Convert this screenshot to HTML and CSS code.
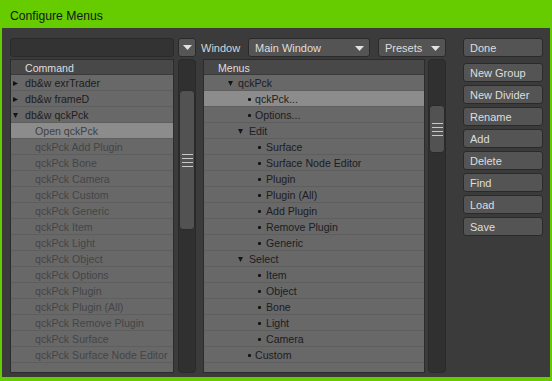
FILE: index.html
```html
<!DOCTYPE html>
<html>
<head>
<meta charset="utf-8">
<link rel="stylesheet" href="styles.css">
</head>
<body>
<div class="window">
  <div class="titlebar">Configure Menus</div>
  <div class="body">
    <div class="toolbar">
      <div class="search"></div>
      <div class="arrowbtn"><svg class="caret" width="9" height="5" viewBox="0 0 9 5"><polygon points="0,0 9,0 4.5,5"/></svg></div>
      <span class="label">Window</span>
      <div class="select wide"><span>Main Window</span><svg class="caret" width="9" height="5" viewBox="0 0 9 5"><polygon points="0,0 9,0 4.5,5"/></svg></div>
      <div class="select presets"><span>Presets</span><svg class="caret" width="9" height="5" viewBox="0 0 9 5"><polygon points="0,0 9,0 4.5,5"/></svg></div>
      <div class="btn done">Done</div>
    </div>
    <div class="main">
      <div class="list left">
        <div class="head">Command</div>
        <div class="row grp"><svg class="tri" width="5" height="5" viewBox="0 0 5 5"><polygon points="0,0 5,2.5 0,5"/></svg><span>db&amp;w exrTrader</span></div>
        <div class="row grp"><svg class="tri" width="5" height="5" viewBox="0 0 5 5"><polygon points="0,0 5,2.5 0,5"/></svg><span>db&amp;w frameD</span></div>
        <div class="row grp"><svg class="tri" width="5" height="5" viewBox="0 0 5 5"><polygon points="0,0 5,0 2.5,5"/></svg><span>db&amp;w qckPck</span></div>
        <div class="row child sel">Open qckPck</div>
        <div class="row child">qckPck Add Plugin</div>
        <div class="row child">qckPck Bone</div>
        <div class="row child">qckPck Camera</div>
        <div class="row child">qckPck Custom</div>
        <div class="row child">qckPck Generic</div>
        <div class="row child">qckPck Item</div>
        <div class="row child">qckPck Light</div>
        <div class="row child">qckPck Object</div>
        <div class="row child">qckPck Options</div>
        <div class="row child">qckPck Plugin</div>
        <div class="row child">qckPck Plugin (All)</div>
        <div class="row child">qckPck Remove Plugin</div>
        <div class="row child">qckPck Surface</div>
        <div class="row child">qckPck Surface Node Editor</div>
      </div>
      <div class="scroll s1"><div class="thumb t1"><i></i><i></i><i></i><i></i></div></div>
      <div class="list mid">
        <div class="head">Menus</div>
        <div class="row l1"><svg class="tri" width="5" height="5" viewBox="0 0 5 5"><polygon points="0,0 5,0 2.5,5"/></svg><span>qckPck</span></div>
        <div class="row l2 sel"><b class="dot"></b><span>qckPck...</span></div>
        <div class="row l2"><b class="dot"></b><span>Options...</span></div>
        <div class="row l2t"><svg class="tri" width="5" height="5" viewBox="0 0 5 5"><polygon points="0,0 5,0 2.5,5"/></svg><span>Edit</span></div>
        <div class="row l3"><b class="dot"></b><span>Surface</span></div>
        <div class="row l3"><b class="dot"></b><span>Surface Node Editor</span></div>
        <div class="row l3"><b class="dot"></b><span>Plugin</span></div>
        <div class="row l3"><b class="dot"></b><span>Plugin (All)</span></div>
        <div class="row l3"><b class="dot"></b><span>Add Plugin</span></div>
        <div class="row l3"><b class="dot"></b><span>Remove Plugin</span></div>
        <div class="row l3"><b class="dot"></b><span>Generic</span></div>
        <div class="row l2t"><svg class="tri" width="5" height="5" viewBox="0 0 5 5"><polygon points="0,0 5,0 2.5,5"/></svg><span>Select</span></div>
        <div class="row l3"><b class="dot"></b><span>Item</span></div>
        <div class="row l3"><b class="dot"></b><span>Object</span></div>
        <div class="row l3"><b class="dot"></b><span>Bone</span></div>
        <div class="row l3"><b class="dot"></b><span>Light</span></div>
        <div class="row l3"><b class="dot"></b><span>Camera</span></div>
        <div class="row l2"><b class="dot"></b><span>Custom</span></div>
      </div>
      <div class="scroll s2"><div class="thumb t2"><i></i><i></i><i></i><i></i></div></div>
      <div class="buttons">
        <div class="btn">New Group</div>
        <div class="btn">New Divider</div>
        <div class="btn">Rename</div>
        <div class="btn">Add</div>
        <div class="btn">Delete</div>
        <div class="btn">Find</div>
        <div class="btn">Load</div>
        <div class="btn">Save</div>
      </div>
    </div>
  </div>
</div>
</body>
</html>
```

FILE: styles.css
```css
* { box-sizing: border-box; }
html, body { margin: 0; padding: 0; }
body {
  background: #66cc00;
  font-family: "Liberation Sans", Arial, sans-serif;
  font-size: 10.6px;
  width: 552px;
  height: 381px;
  overflow: hidden;
}
.window { width: 552px; height: 381px; display: flex; flex-direction: column; }
.titlebar {
  height: 28px;
  padding: 4px 0 0 10px;
  line-height: 24px;
  font-size: 12.2px;
  color: #161616;
}
.body {
  margin: 0 2px 0 2px;
  height: 349px;
  background: #3b3b3b;
  padding: 10px 0 0 8px;
}
.toolbar { display: flex; align-items: center; height: 19px; }
.search {
  width: 164px; height: 19px;
  background: #333333;
  border: 1px solid #2a2a2a;
  border-radius: 3px;
}
.arrowbtn {
  width: 18px; height: 19px;
  margin-left: 4px;
  background: #565656;
  border: 1px solid #2a2a2a;
  border-radius: 3px;
  display: flex; align-items: center; justify-content: center;
}
.caret { fill: #e2e2e2; display: block; }
.label { width: 47px; margin-left: 5px; color: #d6d6d6; font-size: 11px; padding-top: 1px; }
.select {
  height: 19px;
  background: #545454;
  border: 1px solid #2a2a2a;
  border-radius: 3px;
  color: #dedede;
  display: flex; align-items: center; justify-content: space-between;
  padding: 1px 5px 0 6px;
  font-size: 11px;
}
.wide { width: 122px; }
.presets { width: 68px; margin-left: 8px; }
.btn {
  width: 80px; height: 19px;
  background: #545454;
  border: 1px solid #2a2a2a;
  border-radius: 3px;
  color: #dedede;
  padding: 1px 0 0 6px;
  line-height: 16px;
  font-size: 11px;
}
.done { margin-left: 17px; }
.main { display: flex; margin-top: 2px; height: 314px; }
.list {
  height: 314px;
  background: #686868;
  border: 1px solid #2c2c2c;
  overflow: hidden;
}
.left { width: 164px; }
.mid { width: 222px; margin-left: 7px; }
.head {
  height: 15px;
  background: #484848;
  color: #dedede;
  line-height: 14px;
  padding-top: 1px;
  border-bottom: 1px solid #3a3a3a;
}
.left .head { padding-left: 14px; }
.mid .head { padding-left: 14px; }
.row {
  height: 16px;
  line-height: 14px;
  padding-top: 1px;
  border-bottom: 1px solid #5e5e5e;
  display: flex; align-items: center;
  white-space: nowrap;
  color: #1c1c22;
}
.row.sel { background: #8c8c8c; }
.tri { fill: #141414; flex: none; display: block; }
.grp .tri { margin-left: 2px; margin-right: 7px; }
.child { padding-left: 24px; color: #454545; }
.child.sel { color: #404040; }
.dot { width: 3px; height: 3px; background: #141414; border-radius: 1px; flex: none; display: block; }
.l1 { padding-left: 24px; }
.l1 .tri { margin-right: 5px; }
.l2 { padding-left: 44px; }
.l2 .dot { margin-right: 4px; }
.l2t { padding-left: 34px; }
.l2t .tri { margin-right: 6px; }
.l3 { padding-left: 54px; }
.l3 .dot { margin-right: 5px; }
.scroll {
  width: 18px; height: 314px;
  background: #303030;
  border: 1px solid #2a2a2a;
  border-radius: 4px;
}
.s1 { margin-left: 4px; }
.s2 { margin-left: 3px; }
.thumb {
  width: 16px;
  background: #525252;
  border: 1px solid #2a2a2a;
  border-radius: 4px;
  display: flex; flex-direction: column; align-items: center; justify-content: center;
  gap: 3px;
}
.thumb i { display: block; width: 11px; height: 1px; background: #c8c8c8; }
.t1 { margin-top: 30px; height: 140px; }
.t2 { margin-top: 45px; height: 48px; }
.buttons {
  margin-left: 17px;
  padding-top: 4px;
  display: flex; flex-direction: column; gap: 3px;
}
```
